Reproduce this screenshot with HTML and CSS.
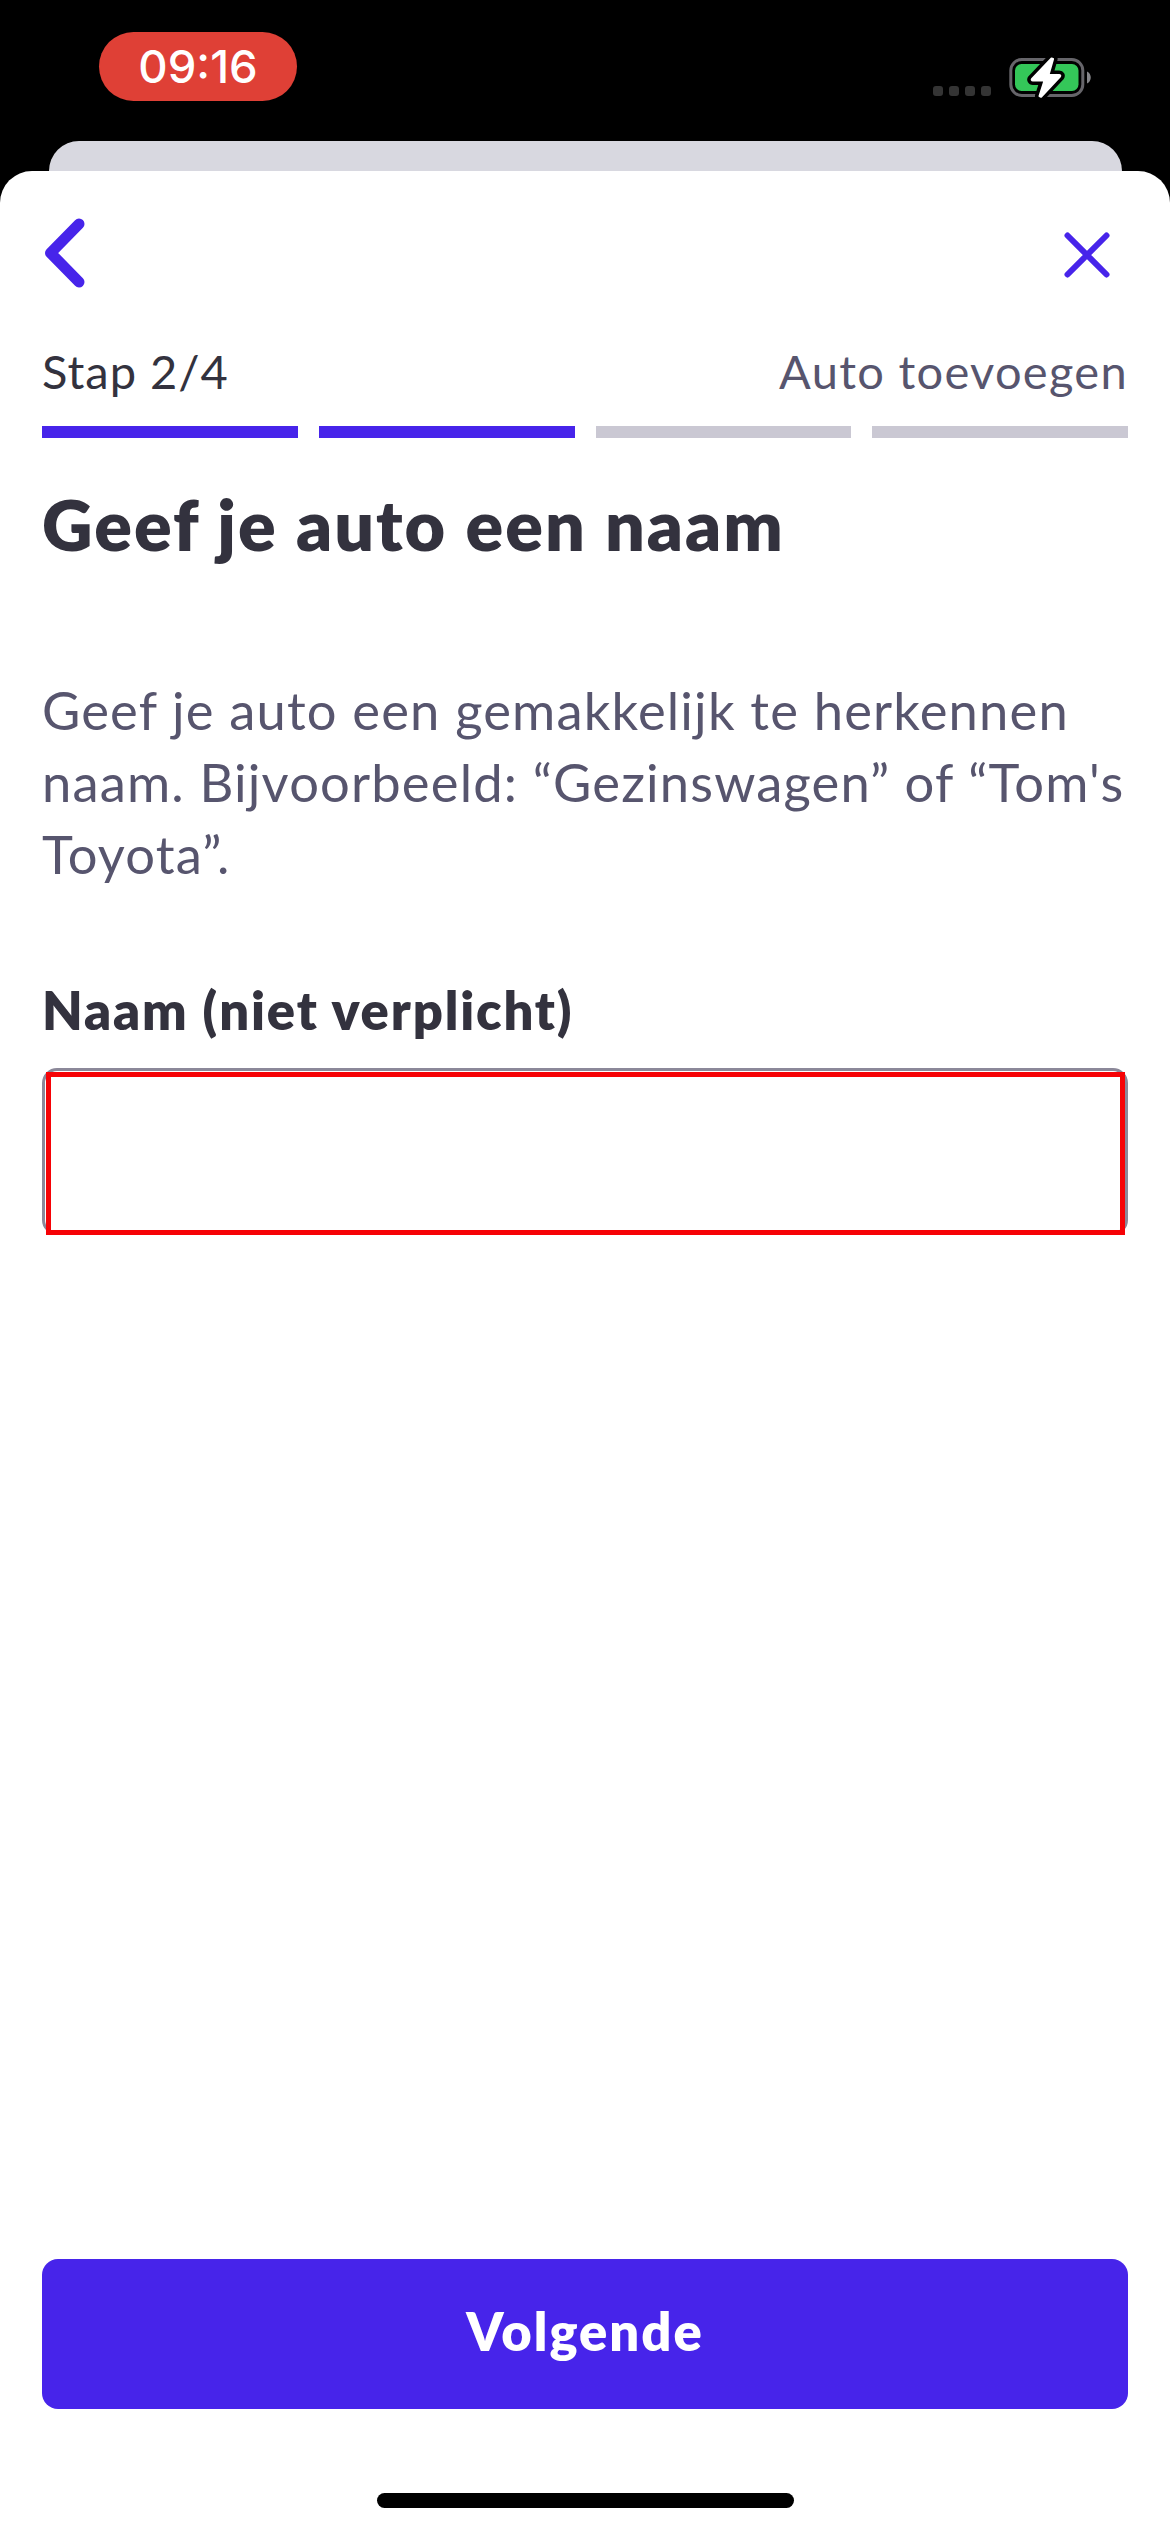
FILE: index.html
```html
<!DOCTYPE html>
<html lang="nl">
<head>
<meta charset="utf-8">
<title>Auto toevoegen</title>
<link rel="stylesheet" href="styles.css">
</head>
<body>
<div class="screen">
  <header class="status">
    <div class="clock">09:16</div>
    <div class="indicators">
      <div class="signal"><i></i><i></i><i></i><i></i></div>
      <svg class="battery" width="84" height="44" viewBox="0 0 84 44">
        <rect x="1.800" y="3.500" width="72" height="36" rx="11" fill="none" stroke="#66656a" stroke-width="3"/>
        <rect x="6" y="8" width="63.500" height="27" rx="6.500" fill="#34c759"/>
        <path d="M78 15.500c5 2 5 10 0 12z" fill="#86868a"/>
        <path d="M42.500 2.500 23 23c-.6.700-.2 1.500.8 1.500H35.500l-5 15.500 1.600.8L51 20.500c.6-.8.200-1.500-.8-1.500H39.500l4.600-16z" fill="#fff" stroke="#000" stroke-width="9" stroke-linejoin="round"/>
        <path d="M42.500 2.500 23 23c-.6.700-.2 1.500.8 1.500H35.500l-5 15.500 1.600.8L51 20.500c.6-.8.200-1.500-.8-1.500H39.500l4.600-16z" fill="#fff" stroke="#fff" stroke-width="2" stroke-linejoin="round"/>
      </svg>
    </div>
  </header>
  <div class="sheet-behind"></div>
  <main class="sheet">
    <nav class="nav">
      <svg width="44" height="72" viewBox="0 0 44 72"><path d="M37 7 8.500 36 37 65" fill="none" stroke="#4724ea" stroke-width="11" stroke-linecap="round" stroke-linejoin="round"/></svg>
      <svg class="close" width="48" height="48" viewBox="0 0 48 48"><path d="M4.500 4.500l39 39M43.500 4.500l-39 39" stroke="#4724ea" stroke-width="6" stroke-linecap="round"/></svg>
    </nav>
    <div class="step-row"><span class="step">Stap 2/4</span><span class="flow">Auto toevoegen</span></div>
    <div class="progress"><i class="done"></i><i class="done"></i><i></i><i></i></div>
    <h1 class="title">Geef je auto een naam</h1>
    <p class="intro">Geef je auto een gemakkelijk te herkennen<br>naam. Bijvoorbeeld: “Gezinswagen” of “Tom's<br>Toyota”.</p>
    <label class="label" for="name">Naam (niet verplicht)</label>
    <div class="field"><input class="input" id="name" type="text"><div class="highlight"></div></div>
    <button class="next" type="button">Volgende</button>
    <div class="home"></div>
  </main>
</div>
</body>
</html>
```
FILE: styles.css
```css
* { box-sizing: border-box; }
body { margin: 0; background: #000; font-family: Lato, "Open Sans", sans-serif; }
.screen { width: 1170px; height: 2532px; display: flex; flex-direction: column; background: #000; overflow: hidden; }
.status { height: 141px; flex: none; padding: 32px 77px 0 99px; display: flex; justify-content: space-between; align-items: flex-start; }
.clock { width: 198px; height: 69px; border-radius: 35px; background: #df4036; color: #fff; font: 500 45.5px/69px Inter, sans-serif; text-align: center; }
.indicators { display: flex; align-items: flex-start; gap: 18px; padding-top: 23px; }
.signal { display: flex; gap: 6px; padding-top: 31px; }
.signal i { width: 10px; height: 10px; border-radius: 3px; background: #343434; }
.battery { display: block; margin-top: 1px; }
.sheet-behind { flex: none; height: 90px; margin: 0 48.5px; border-radius: 30px 30px 0 0; background: #d8d8e0; }
.sheet { flex: 1; margin-top: -60px; padding: 0 42px; border-radius: 32px 32px 0 0; background: #fff; display: flex; flex-direction: column; }
.nav { height: 164px; padding: 46px 17.5px 0 0; display: flex; justify-content: space-between; align-items: flex-start; }
.close { margin-top: 14px; }
.step-row { height: 91px; display: flex; justify-content: space-between; font-size: 47px; line-height: 72px; }
.step { color: #33323e; letter-spacing: 1px; }
.flow { color: #57556e; letter-spacing: 1.3px; }
.progress { height: 12px; display: grid; grid-template-columns: repeat(4, 1fr); gap: 21px; }
.progress i { background: #cac8d3; }
.progress .done { background: #4724ea; }
.title { margin: 38px 0 0; font-size: 70px; line-height: 96px; font-weight: 800; letter-spacing: 2px; color: #33323e; }
.intro { margin: 102px 0 0; font-size: 52.5px; line-height: 72px; letter-spacing: 1.17px; color: #57556e; white-space: nowrap; }
.label { margin-top: 84px; font-size: 52.5px; line-height: 72px; font-weight: 800; letter-spacing: 1.85px; color: #33323e; }
.field { position: relative; margin-top: 22px; height: 167px; }
.input { display: block; width: 100%; height: 100%; border: 3px solid #8b8899; border-radius: 15px; background: #fff; }
.highlight { position: absolute; inset: 3.5px 3.5px 0; border: 5px solid #f60206; }
.next { margin-top: auto; height: 150px; padding: 0 0 7px; border: 0; border-radius: 16px; background: #4724ea; color: #fff; font: 800 52.5px/72px Lato, sans-serif; letter-spacing: 2px; }
.home { align-self: center; width: 417px; height: 15px; margin: 84px 0 24px; border-radius: 8px; background: #000; }
```
